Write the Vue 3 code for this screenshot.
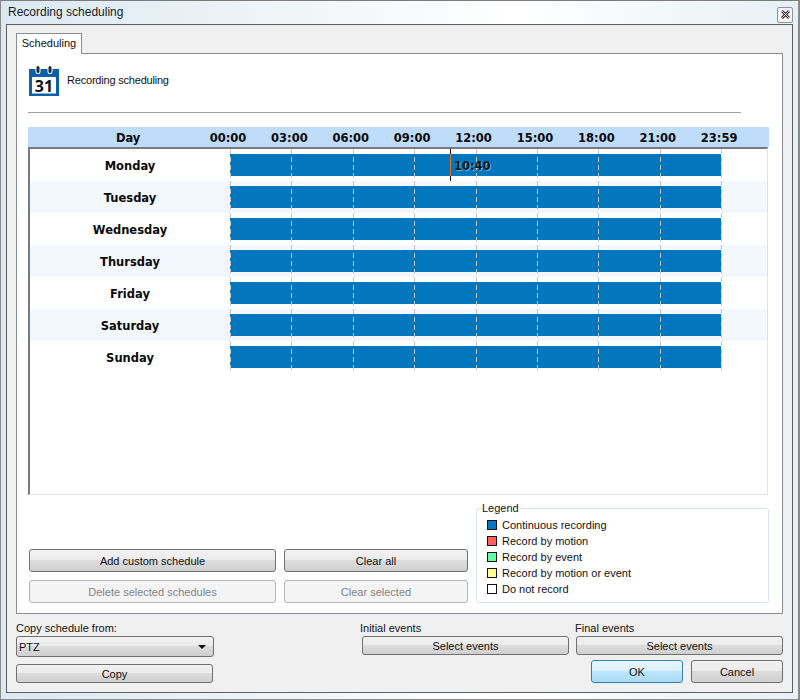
<script setup>
const days = ['Monday', 'Tuesday', 'Wednesday', 'Thursday', 'Friday', 'Saturday', 'Sunday']
const hours = ['00:00', '03:00', '06:00', '09:00', '12:00', '15:00', '18:00', '21:00', '23:59']

const legend = [
  { name: 'Continuous recording', color: '#0277bd' },
  { name: 'Record by motion', color: '#ff6161' },
  { name: 'Record by event', color: '#61ffa8' },
  { name: 'Record by motion or event', color: '#ffff91' },
  { name: 'Do not record', color: '#ffffff' }
]

// tick lines over the bars, one per hour label
const tickLeft = (i) => `${(i * 100) / (hours.length - 1)}%`
</script>

<template>
  <div class="window">
    <div class="titlebar">
      <span class="title">Recording scheduling</span>
      <button class="close-btn">
        <svg width="11" height="11" viewBox="0 0 11 11">
          <path d="M2 2l7 7M9 2l-7 7" stroke="#333" stroke-width="2.6" fill="none" />
          <path d="M2 2l7 7M9 2l-7 7" stroke="#fff" stroke-width="0.8" fill="none" />
        </svg>
      </button>
    </div>

    <div class="frame">
      <div class="tabs">
        <div class="tab">Scheduling</div>
      </div>

      <div class="pane">
        <div class="heading">
          <svg class="cal" width="30" height="30" viewBox="0 0 30 30">
            <rect x="0" y="3" width="30" height="27" fill="#0d5fa8" />
            <rect x="3" y="11" width="24" height="16.5" fill="#fff" />
            <rect x="6.5" y="0" width="5" height="8" rx="2.5" fill="#fff" />
            <rect x="18.5" y="0" width="5" height="8" rx="2.5" fill="#fff" />
            <rect x="7.5" y="0" width="3" height="7" rx="1.5" fill="#1b2b3c" />
            <rect x="19.5" y="0" width="3" height="7" rx="1.5" fill="#1b2b3c" />
            <text x="15" y="25.5" text-anchor="middle" class="cal-num">31</text>
          </svg>
          <span>Recording scheduling</span>
        </div>
        <div class="rule"></div>

        <div class="sched-head">
          <div class="sched-day">Day</div>
          <div v-for="h in hours" :key="h" class="sched-hour">{{ h }}</div>
        </div>

        <div class="sched-table">
          <div class="rows">
            <div v-for="d in days" :key="d" class="row">
              <div class="row-day">{{ d }}</div>
              <div class="bar"></div>
            </div>
            <div class="ticks">
              <div
                v-for="(h, i) in hours"
                :key="h"
                class="tick"
                :style="{ left: tickLeft(i) }"
              ></div>
            </div>
            <div class="now"><span class="now-label">10:40</span></div>
          </div>
        </div>

        <div class="controls">
          <div class="actions">
            <button class="btn">Add custom schedule</button>
            <button class="btn">Clear all</button>
            <button class="btn" disabled>Delete selected schedules</button>
            <button class="btn" disabled>Clear selected</button>
          </div>
          <div class="legend">
            <span class="legend-title">Legend</span>
            <div v-for="l in legend" :key="l.name" class="legend-row">
              <span class="swatch" :style="{ backgroundColor: l.color }"></span>
              <span>{{ l.name }}</span>
            </div>
          </div>
        </div>
      </div>

      <div class="footer">
        <div class="copy-col">
          <label class="lbl">Copy schedule from:</label>
          <div class="select">
            <span>PTZ</span>
            <span class="caret"></span>
          </div>
          <button class="btn copy-btn">Copy</button>
        </div>
        <div class="right-col">
          <div class="events">
            <div class="event">
              <label class="lbl">Initial events</label>
              <button class="btn ev-btn">Select events</button>
            </div>
            <div class="event">
              <label class="lbl">Final events</label>
              <button class="btn ev-btn">Select events</button>
            </div>
          </div>
          <div class="dialog-btns">
            <button class="btn dlg-btn primary">OK</button>
            <button class="btn dlg-btn">Cancel</button>
          </div>
        </div>
      </div>
    </div>
  </div>
</template>

<style scoped>
.window {
  box-sizing: border-box;
  width: 800px;
  height: 700px;
  padding: 0 6px 6px 6px;
  display: flex;
  flex-direction: column;
  font-family: "Liberation Sans", Arial, sans-serif;
  font-size: 11px;
  color: #111;
  background: linear-gradient(90deg, #dbe9f2 0, #f2f6f8 40%, #ffffff 65%, #e6f0f3 100%);
  border-top: 1px solid #7c7c7c;
  border-left: 1px solid #8a8a8a;
  border-right: 2px solid #8a8a8a;
  border-bottom: 1px solid #8a8a8a;
  overflow: hidden;
}

/* TITLE */
.titlebar {
  height: 23px;
  flex: none;
  display: flex;
  align-items: center;
  justify-content: space-between;
  margin-left: 1px;
}
.title { font-size: 12px; color: #1a1a1a; margin-bottom: 1px; }
.close-btn {
  width: 16px;
  height: 16px;
  padding: 0;
  margin: 4px -1px 0 0;
  display: flex;
  align-items: center;
  justify-content: center;
  background: #f3f3f3;
  border: 1px solid #8d9499;
  border-radius: 2px;
}

/* FRAME */
.frame {
  box-sizing: border-box;
  width: 787px;
  margin-left: -1px;
  height: 670px;
  background: #f0f0f0;
  border: 1px solid #5e6063;
  padding: 8px 10px 0 9px;
}
.tabs { display: flex; height: 20px; }
.tab {
  box-sizing: border-box;
  width: 66px;
  height: 21px;
  background: #fff;
  border: 1px solid #898c95;
  border-bottom: none;
  position: relative;
  z-index: 1;
  text-align: center;
  line-height: 19px;
}
.pane {
  box-sizing: border-box;
  width: 767px;
  height: 561px;
  background: #fff;
  border: 1px solid #898c95;
  padding: 12px 0 0 11px;
}

/* HEADING */
.heading { display: flex; align-items: center; gap: 8px; height: 30px; margin-left: 1px; }
.heading span { margin-top: -2px; letter-spacing: -0.2px; }
.cal { flex: none; }
.cal-num { font-family: "Open Sans", sans-serif; font-weight: 700; font-size: 16px; fill: #111; }
.rule { width: 713px; height: 1px; background: #a0a0a0; margin-top: 16px; }

/* SCHEDULE */
.sched-head {
  width: 741px;
  height: 20px;
  margin-top: 14px;
  background: #bfdcfb;
  display: grid;
  grid-template-columns: 169.3px repeat(9, 61.4px);
  font-family: "DejaVu Sans", sans-serif;
  font-weight: 700;
  font-size: 11.5px;
  line-height: 23px;
  text-align: center;
  color: #0a0a0a;
}
.sched-day { padding-left: 31px; }
.sched-table {
  box-sizing: border-box;
  width: 740px;
  height: 348px;
  border-top: 2px solid #7a7a7a;
  border-left: 2px solid #7a7a7a;
  border-right: 1px solid #e2e2e2;
  border-bottom: 1px solid #e2e2e2;
}
.rows { position: relative; }
.row { height: 32px; display: flex; align-items: center; }
.row:nth-child(even) { background: #f3f8fd; }
.row-day {
  width: 200px;
  flex: none;
  padding-top: 2px;
  text-align: center;
  font-family: "DejaVu Sans", sans-serif;
  font-weight: 700;
  font-size: 11.5px;
  color: #0a0a0a;
}
.bar { width: 491px; height: 22px; margin-top: -1px; background: #0277bd; }

/* TICKS */
.ticks { position: absolute; left: 200px; top: 0; width: 491px; height: 224px; }
.tick {
  position: absolute;
  top: 0;
  width: 1px;
  height: 100%;
  background: repeating-linear-gradient(180deg, #c4c4c4 0 5px, transparent 5px 8px);
}

/* CURRENT TIME */
.now {
  position: absolute;
  left: 420px;
  top: 0;
  width: 1px;
  height: 32px;
  background: linear-gradient(180deg, #111 0 5px, #e8701a 5px 27px, #111 27px);
}
.now-label {
  position: absolute;
  left: 4px;
  top: 10px;
  font-family: "DejaVu Sans", sans-serif;
  font-weight: 700;
  font-size: 11.5px;
  color: #111;
  text-shadow: 1px 1px 1px rgba(255, 255, 255, 0.45);
}

/* CONTROLS */
.controls { display: flex; align-items: flex-end; margin-top: 13px; margin-left: 1px; }
.actions {
  display: grid;
  grid-template-columns: 247px 184px;
  grid-auto-rows: 23px;
  column-gap: 8px;
  row-gap: 8px;
}
.legend {
  box-sizing: border-box;
  position: relative;
  width: 293px;
  height: 95px;
  margin-left: 8px;
  padding: 8px 0 0 10px;
  border: 1px solid #d9e3ea;
  border-radius: 3px;
}
.legend-title {
  position: absolute;
  left: 5px;
  top: -7px;
  padding-right: 1px;
  background: #fff;
  line-height: 13px;
}
.legend-row { display: flex; align-items: center; gap: 5px; height: 16px; }
.swatch {
  box-sizing: border-box;
  width: 10px;
  height: 10px;
  border: 1px solid #111;
  flex: none;
}

/* BUTTONS */
.btn {
  box-sizing: border-box;
  padding: 0;
  font-family: inherit;
  font-size: 11px;
  color: #111;
  border: 1px solid #707070;
  border-radius: 3px;
  background: linear-gradient(180deg, #f2f2f2 0, #ebebeb 48%, #dddddd 50%, #cfcfcf 100%);
}
.btn:disabled {
  color: #848484;
  border-color: #b5b5b5;
  background: #f4f4f4;
}
.primary {
  border-color: #3c7fb1;
  background: linear-gradient(180deg, #eaf6fd 0, #d9f0fc 48%, #bee6fd 50%, #a7d9f5 100%);
}

/* FOOTER */
.footer { display: flex; }
.copy-col { width: 198px; flex: none; display: flex; flex-direction: column; }
.lbl { display: block; height: 22px; line-height: 28px; }
.select {
  box-sizing: border-box;
  height: 21px;
  display: flex;
  align-items: center;
  justify-content: space-between;
  padding: 0 7px 0 2px;
  border: 1px solid #707070;
  border-radius: 3px;
  background: linear-gradient(180deg, #f2f2f2 0, #ebebeb 48%, #dddddd 50%, #cfcfcf 100%);
}
.caret {
  width: 0;
  height: 0;
  border-left: 4px solid transparent;
  border-right: 4px solid transparent;
  border-top: 4px solid #111;
}
.copy-btn { width: 197px; height: 19px; margin-top: 7px; }
.right-col { width: 421px; margin-left: 148px; }
.events { display: flex; gap: 7px; }
.event { width: 207px; }
.event .lbl { margin-left: -2px; }
.event:last-child .lbl { margin-left: -1px; }
.ev-btn { width: 207px; height: 19px; display: block; }
.dialog-btns { display: flex; justify-content: flex-end; gap: 8px; margin-top: 5px; }
.dlg-btn { width: 92px; height: 23px; }
</style>

<style>
html, body { margin: 0; padding: 0; background: #fff; }
</style>
